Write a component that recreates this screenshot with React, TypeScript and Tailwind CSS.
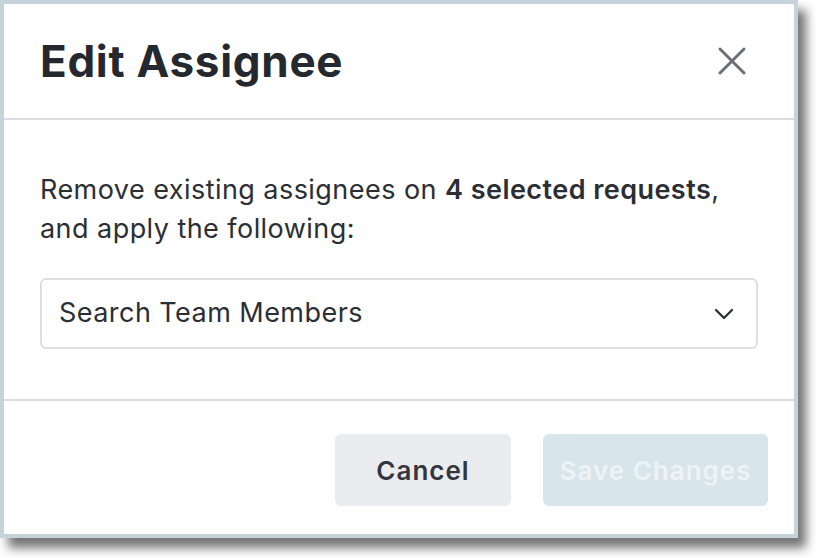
import { X, ChevronDown } from 'lucide-react';

export default function App() {
  return (
    <div className="min-h-screen bg-white font-['Inter','Noto_Sans',sans-serif]">
      <div className="w-[798px] h-[538px] border-4 border-[#c6d3db] bg-white shadow-[8px_10px_10px_rgba(0,0,0,0.55)] flex flex-col">
        {/* header */}
        <div className="h-[116px] flex items-center justify-between pl-[36px] pr-[38px] border-b-2 border-[#d9dde2]">
          <h1 className="text-[44px] font-bold tracking-[0.7px] text-[#25282e]">Edit Assignee</h1>
          <button className="text-[#6b6e75]">
            <X size={48} strokeWidth={1.5} />
          </button>
        </div>

        {/* body */}
        <div className="flex-1 px-[36px] pt-[50px] border-b-2 border-[#d9dde2]">
          <p className="text-[27px] leading-[39px] tracking-[0.45px] text-[#2b2e34]">
            Remove existing assignees on <span className="font-semibold">4 selected requests</span>,
            <br />
            and apply the following:
          </p>
          <div className="mt-[30px] h-[71px] border-2 border-[#dcdfe4] rounded-[6px] flex items-center justify-between pl-[17px] pr-[16px]">
            <span className="text-[27px] tracking-[0.45px] text-[#2b2e34]">Search Team Members</span>
            <ChevronDown size={32} strokeWidth={1.7} className="text-[#2a2d33]" />
          </div>
        </div>

        {/* footer */}
        <div className="h-[133px] flex justify-end gap-[32px] pt-[33px] pr-[26px]">
          <button className="w-[176px] h-[72px] rounded-[6px] bg-[#eaecf0] text-[26px] font-semibold tracking-[1px] text-[#33363c]">
            Cancel
          </button>
          <button className="w-[225px] h-[72px] rounded-[6px] bg-[#d8e5ea] text-[26px] font-semibold tracking-[1px] text-[#eef3f5]">
            Save Changes
          </button>
        </div>
      </div>
    </div>
  );
}
